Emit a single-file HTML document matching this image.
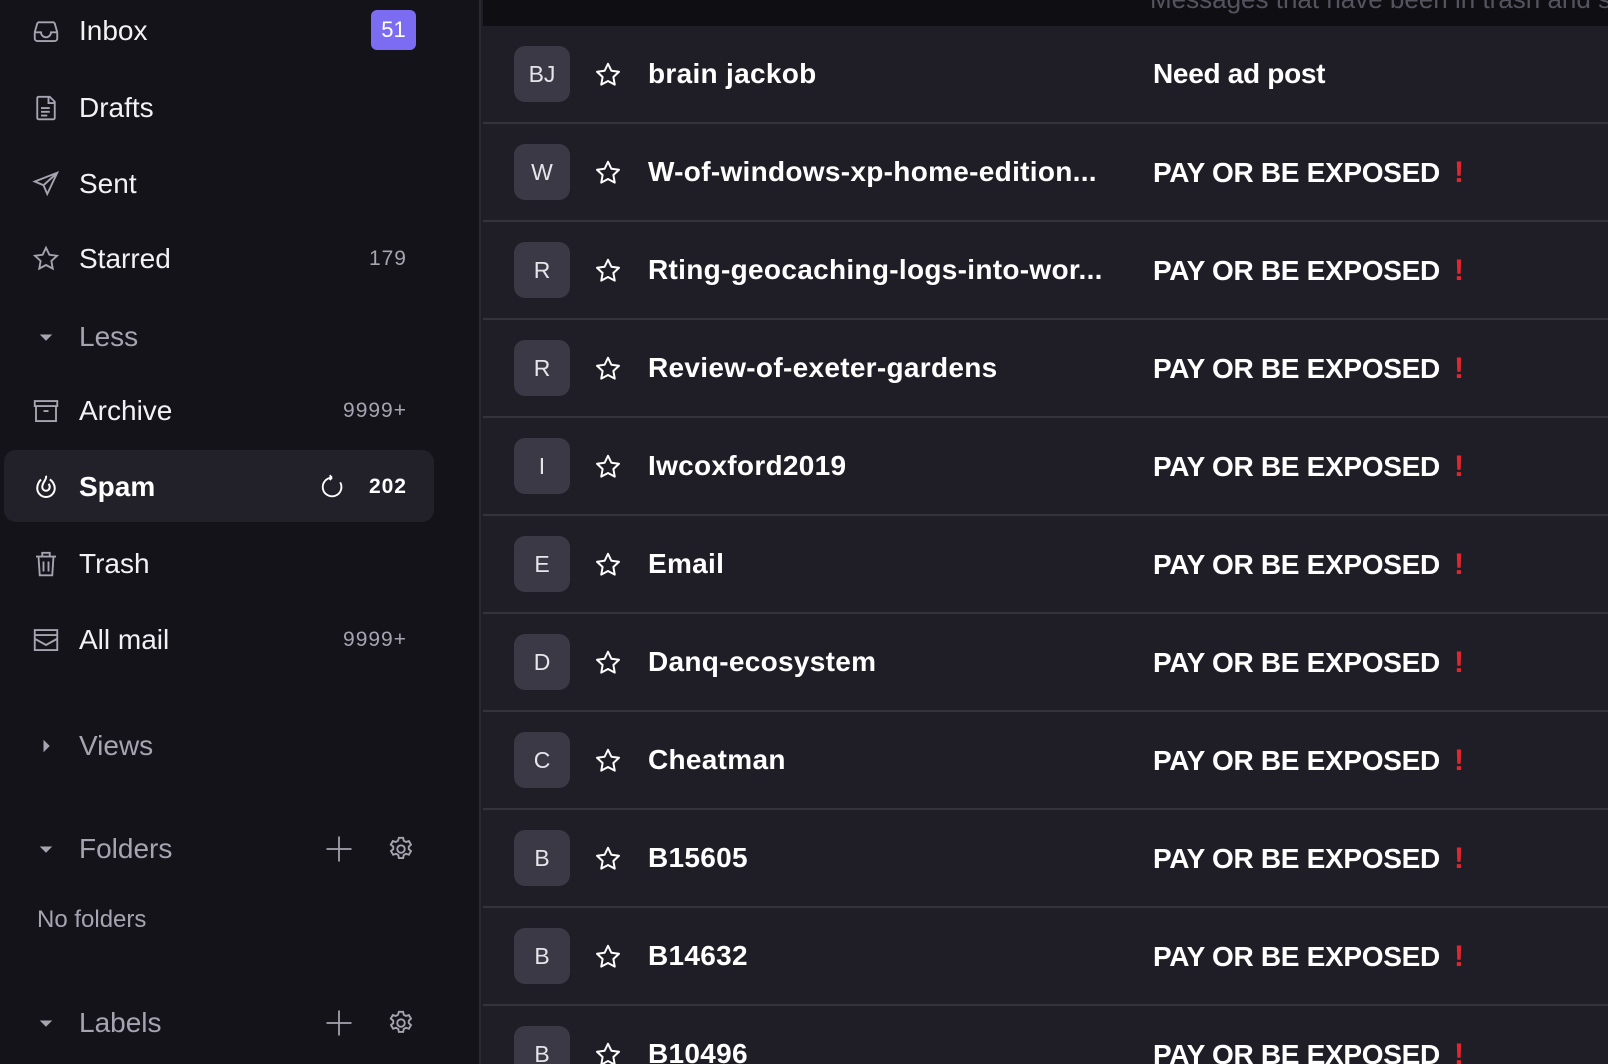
<!DOCTYPE html>
<html><head><meta charset="utf-8"><style>
*{margin:0;padding:0;box-sizing:border-box}
html{width:1608px;height:1064px;overflow:hidden}
body{width:1608px;height:1064px;overflow:hidden;background:#1f1e26;font-family:"Liberation Sans",sans-serif;color:#fff;position:relative}
#side{position:absolute;left:0;top:0;width:481px;height:1064px;background:#14131a;border-right:2px solid #2a2932;z-index:2}
.it{position:absolute;left:0;width:481px;height:40px;display:flex;align-items:center}
.it svg{position:absolute;left:31px;width:30px;height:30px}
.it .t{position:absolute;left:79px;font-size:28px;color:#f2f2f5}
.it .c{position:absolute;right:74px;font-size:21px;color:#a6a4b0;letter-spacing:1px}
.muted .t{color:#a6a4b0}
#hdr{position:absolute;left:483px;top:0;right:0;height:26px;background:#0f0e13;overflow:hidden}
#hdr span{position:absolute;left:667px;top:-16px;font-size:26px;color:#55535e;white-space:nowrap}
#rows{position:absolute;left:0;top:0;width:1608px;height:1064px;overflow:hidden}
.row{position:absolute;left:483px;right:0;height:98px;border-bottom:2px solid #34333d}
.av{position:absolute;left:31px;top:20px;width:56px;height:56px;border-radius:11px;background:#3a3945;color:#e6e6ea;font-size:23px;display:flex;align-items:center;justify-content:center}
.st{position:absolute;left:110px;top:34px;width:30px;height:30px}
.nm{position:absolute;left:165px;top:32px;font-size:28px;font-weight:bold;white-space:nowrap;letter-spacing:0.3px}
.sb{position:absolute;left:670px;top:32px;font-size:28px;font-weight:bold;white-space:nowrap;letter-spacing:-0.3px}
.ex{color:#e0262e;margin-left:14px;font-size:30px}
</style></head><body>
<div id="side">
 <div class="it" style="top:11px"><svg viewBox="0 0 24 24" fill="none" stroke="#a6a4b0" stroke-width="1.5"><path d="M3 13v5a2 2 0 0 0 2 2h14a2 2 0 0 0 2-2v-5M3 13l2-7a2 2 0 0 1 2-1h10a2 2 0 0 1 2 1l2 7M3 13h5a4 4 0 0 0 8 0h5"/></svg><span class="t">Inbox</span><span style="position:absolute;left:371px;top:-1px;width:45px;height:40px;background:#7b6cf2;border-radius:6px;font-size:22px;display:flex;align-items:center;justify-content:center">51</span></div>
 <div class="it" style="top:88px"><svg viewBox="0 0 24 24" fill="none" stroke="#a6a4b0" stroke-width="1.5"><path d="M6 3h9l4 4v13a1 1 0 0 1-1 1H6a1 1 0 0 1-1-1V4a1 1 0 0 1 1-1zM14 3v5h5M8 12h7M8 15h7M8 18h5"/></svg><span class="t">Drafts</span></div>
 <div class="it" style="top:164px"><svg viewBox="0 0 24 24" fill="none" stroke="#a6a4b0" stroke-width="1.5"><path d="M21 3L3 10l7 3 3 7 8-17zM10 13l11-10"/></svg><span class="t">Sent</span></div>
 <div class="it" style="top:239px"><svg viewBox="0 0 24 24" fill="none" stroke="#a6a4b0" stroke-width="1.5"><path d="M12 3l2.7 5.6 6.1.8-4.5 4.2 1.1 6.1L12 16.8 6.6 19.7l1.1-6.1L3.2 9.4l6.1-.8z"/></svg><span class="t">Starred</span><span class="c">179</span></div>
 <div class="it muted" style="top:317px"><svg viewBox="0 0 24 24"><path d="M7 10h10l-5 5z" fill="#a6a4b0"/></svg><span class="t">Less</span></div>
 <div class="it" style="top:391px"><svg viewBox="0 0 24 24" fill="none" stroke="#a6a4b0" stroke-width="1.5"><path d="M3 4h18v4H3zM4 8v12h16V8M10 12h4"/></svg><span class="t">Archive</span><span class="c">9999+</span></div>
 <div style="position:absolute;left:4px;top:450px;width:430px;height:72px;background:#22212a;border-radius:12px"></div>
 <div class="it" style="top:467px"><svg viewBox="0 0 24 24" fill="none" stroke="#fff" stroke-width="1.6"><path d="M12 3c1 3-3 5-3 9a3 3 0 0 0 6 0c0-1-.5-2-1-2.5M8 6c-2 2-3 4-3 7a7 7 0 0 0 14 0c0-3-2-6-4-7"/></svg><span class="t" style="font-weight:bold;color:#fff">Spam</span><svg viewBox="0 0 24 24" fill="none" stroke="#fff" stroke-width="1.6" style="left:318px;width:28px;height:28px"><path d="M12 4a8 8 0 1 0 7 4M12 4l-2-2M12 4L10 6"/></svg><span class="c" style="color:#fff;font-weight:bold">202</span></div>
 <div class="it" style="top:544px"><svg viewBox="0 0 24 24" fill="none" stroke="#a6a4b0" stroke-width="1.5"><path d="M4 6h16M9 6V3h6v3M6 6l1 15h10l1-15M10 10v8M14 10v8"/></svg><span class="t">Trash</span></div>
 <div class="it" style="top:620px"><svg viewBox="0 0 24 24" fill="none" stroke="#a6a4b0" stroke-width="1.5"><path d="M3 4h18v16H3zM3 8h18M3 11l9 5 9-5"/></svg><span class="t">All mail</span><span class="c">9999+</span></div>
 <div class="it muted" style="top:726px"><svg viewBox="0 0 24 24"><path d="M10 7v10l5-5z" fill="#a6a4b0"/></svg><span class="t">Views</span></div>
 <div class="it muted" style="top:829px"><svg viewBox="0 0 24 24"><path d="M7 10h10l-5 5z" fill="#a6a4b0"/></svg><span class="t">Folders</span>
  <svg viewBox="0 0 24 24" fill="none" stroke="#a6a4b0" stroke-width="1.4" style="left:324px"><path d="M12 2v20M2 12h20"/></svg>
  <svg viewBox="0 0 24 24" fill="none" stroke="#a6a4b0" stroke-width="1.5" style="left:386px"><circle cx="12" cy="12" r="3"/><path d="M10.3 3h3.4l.5 2.4 1.8 1 2.3-.8 1.7 2.9-1.8 1.6v2l1.8 1.6-1.7 2.9-2.3-.8-1.8 1-.5 2.4h-3.4l-.5-2.4-1.8-1-2.3.8-1.7-2.9 1.8-1.6v-2L3.8 8.5l1.7-2.9 2.3.8 1.8-1z"/></svg></div>
 <div style="position:absolute;left:37px;top:906px;font-size:24px;color:#a6a4b0">No folders</div>
 <div class="it muted" style="top:1003px"><svg viewBox="0 0 24 24"><path d="M7 10h10l-5 5z" fill="#a6a4b0"/></svg><span class="t">Labels</span>
  <svg viewBox="0 0 24 24" fill="none" stroke="#a6a4b0" stroke-width="1.4" style="left:324px"><path d="M12 2v20M2 12h20"/></svg>
  <svg viewBox="0 0 24 24" fill="none" stroke="#a6a4b0" stroke-width="1.5" style="left:386px"><circle cx="12" cy="12" r="3"/><path d="M10.3 3h3.4l.5 2.4 1.8 1 2.3-.8 1.7 2.9-1.8 1.6v2l1.8 1.6-1.7 2.9-2.3-.8-1.8 1-.5 2.4h-3.4l-.5-2.4-1.8-1-2.3.8-1.7-2.9 1.8-1.6v-2L3.8 8.5l1.7-2.9 2.3.8 1.8-1z"/></svg></div>
</div>
<div id="rows"></div>
<div id="hdr"><span>Messages that have been in trash and spam</span></div>
<script>
var d=[["BJ","brain jackob","Need ad post",0],["W","W-of-windows-xp-home-edition...","PAY OR BE EXPOSED",1],["R","Rting-geocaching-logs-into-wor...","PAY OR BE EXPOSED",1],["R","Review-of-exeter-gardens","PAY OR BE EXPOSED",1],["I","Iwcoxford2019","PAY OR BE EXPOSED",1],["E","Email","PAY OR BE EXPOSED",1],["D","Danq-ecosystem","PAY OR BE EXPOSED",1],["C","Cheatman","PAY OR BE EXPOSED",1],["B","B15605","PAY OR BE EXPOSED",1],["B","B14632","PAY OR BE EXPOSED",1],["B","B10496","PAY OR BE EXPOSED",1]];
var h="";
var star='<svg class="st" viewBox="0 0 24 24" fill="none" stroke="#fff" stroke-width="1.6" stroke-linejoin="round"><path d="M12 3l2.7 5.6 6.1.8-4.5 4.2 1.1 6.1L12 16.8 6.6 19.7l1.1-6.1L3.2 9.4l6.1-.8z"/></svg>';
d.forEach(function(r,i){h+='<div class="row" style="top:'+(26+i*98)+'px"><div class="av">'+r[0]+'</div>'+star+'<div class="nm">'+r[1]+'</div><div class="sb">'+r[2]+(r[3]?'<span class="ex">!</span>':'')+'</div></div>';});
document.getElementById("rows").innerHTML=h;
</script>
</body></html>
